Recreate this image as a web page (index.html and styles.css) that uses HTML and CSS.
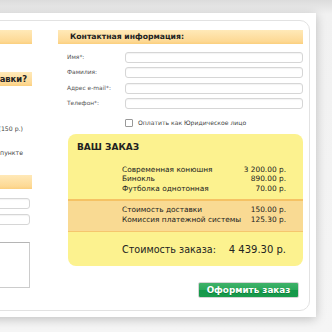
FILE: index.html
```html
<!DOCTYPE html>
<html lang="ru">
<head>
<meta charset="UTF-8" />
<meta name="viewport" content="width=device-width, initial-scale=1" />
<title>Оформление заказа</title>
<link rel="stylesheet" href="styles.css">
</head>
<body>

<div class="sheet">
  <div class="panel">

    <div class="col-left">
      <div class="bar">Ваш город</div>
      <div class="bar bar-end">Способ доставки?</div>
      <div class="opt opt-first">Курьерская доставка по Москве (150 р.)</div>
      <div class="opt">Самовывоз в пункте</div>
      <div class="bar bar-third">Адрес доставки</div>
      <input class="field field-left" type="text" />
      <input class="field field-left" type="text" />
      <textarea class="note"></textarea>
    </div>

    <div class="col-right">
      <div class="bar">Контактная информация:</div>

      <div class="form">
        <label>Имя*:</label><input class="field" type="text" />
        <label>Фамилия:</label><input class="field" type="text" />
        <label>Адрес e-mail*:</label><input class="field" type="text" />
        <label>Телефон*:</label><input class="field" type="text" />
      </div>

      <div class="legal">
        <span class="check"></span>
        <span>Оплатить как Юридическое лицо</span>
      </div>

      <div class="order">
        <div class="order-title">ВАШ ЗАКАЗ</div>
        <div class="lines">
          <div class="line"><span>Современная конюшня</span><span>3 200.00 р.</span></div>
          <div class="line"><span>Бинокль</span><span>890.00 р.</span></div>
          <div class="line"><span>Футболка однотонная</span><span>70.00 р.</span></div>
        </div>
        <div class="band">
          <div class="line"><span>Стоимость доставки</span><span>150.00 р.</span></div>
          <div class="line"><span>Комиссия платежной системы</span><span>125.30 р.</span></div>
        </div>
        <div class="total">
          <span>Стоимость заказа:</span>
          <span class="sum">4 439.30 р.</span>
        </div>
      </div>

      <div class="actions">
        <button class="submit">Оформить заказ</button>
      </div>
    </div>

  </div>
</div>

</body>
</html>
```

FILE: styles.css
```css
body {
  margin: 0;
  height: 332px;
  overflow: hidden;
  background: linear-gradient(#dcdcdc, #f1f1f1 14px, #f5f5f5);
  font-family: Verdana, "DejaVu Sans", sans-serif;
  color: #333;
}
.sheet {
  margin: 13px 0 0 -220px;
  width: 524px;
  padding: 7px 6px 6px 6px;
  background: #fff;
  box-shadow: 0 2px 10px rgba(0, 0, 0, 0.22);
}
.panel {
  display: flex;
  gap: 26px;
  height: 280px;
  padding: 9px 6px 0 20px;
  border: 1px solid #e2e2e2;
  border-radius: 10px;
}
.col-left {
  width: 225px;
  display: flex;
  flex-direction: column;
  align-items: flex-end;
}
.col-right {
  width: 245px;
}
.bar {
  align-self: stretch;
  height: 14px;
  line-height: 14px;
  padding-left: 12px;
  font-size: 7.7px;
  font-weight: bold;
  color: #222;
  white-space: nowrap;
  background: linear-gradient(#ffe9b8, #fdd995 80%, #fbcf7e);
}
.bar-end {
  margin-top: 28px;
  text-align: right;
  padding-right: 5px;
  font-size: 8.4px;
}
.opt {
  font-size: 6.2px;
  color: #444;
  white-space: nowrap;
  margin-right: 9px;
  line-height: 10px;
}
.opt-first {
  margin-top: 38px;
}
.opt + .opt {
  margin-top: 14px;
}
.bar-third {
  margin-top: 17px;
}
.field {
  box-sizing: border-box;
  height: 11px;
  margin: 0;
  padding: 0;
  border: 1px solid #d6d6d6;
  border-radius: 3px;
  background: #fff;
  box-shadow: inset 0 1px 1px rgba(0, 0, 0, 0.05);
}
.field-left {
  width: 200px;
  margin-right: 2px;
  margin-top: 9px;
}
.field-left + .field-left {
  margin-top: 5px;
}
.note {
  box-sizing: border-box;
  width: 200px;
  height: 46px;
  margin: 17px 2px 0 0;
  border: 1px solid #b5b5b5;
  border-right-color: #ccc;
  border-bottom-color: #ccc;
  resize: none;
}
.form {
  display: grid;
  grid-template-columns: 58px 178px;
  grid-auto-rows: 11px;
  row-gap: 4.33px;
  margin-top: 8px;
  padding-left: 9px;
}
.form label {
  font-size: 5.9px;
  line-height: 11px;
  color: #555;
  white-space: nowrap;
}
.legal {
  display: flex;
  align-items: center;
  gap: 5px;
  margin-top: 10px;
  padding-left: 67px;
  height: 8px;
  font-size: 6.1px;
  color: #444;
  white-space: nowrap;
}
.check {
  box-sizing: border-box;
  width: 8px;
  height: 8px;
  border: 1px solid #999;
  border-radius: 1px;
  background: #fff;
}
.order {
  box-sizing: border-box;
  height: 132px;
  margin: 7px 0 0 10px;
  border-radius: 8px;
  background: #fcf28f;
  overflow: hidden;
}
.order-title {
  padding: 7px 0 0 9px;
  font-size: 9px;
  line-height: 12px;
  font-weight: bold;
  color: #222;
}
.lines {
  margin-top: 12px;
  padding: 0 17px 0 54px;
}
.line {
  display: flex;
  justify-content: space-between;
  font-size: 7.4px;
  line-height: 9.5px;
  color: #222;
  white-space: nowrap;
}
.band {
  margin-top: 5.25px;
  padding: 4px 17px 6px 54px;
  background: #f9da93;
  border-top: 2px solid #f5c264;
  border-bottom: 1px solid #f5c66e;
}
.band .line {
  line-height: 10px;
}
.total {
  display: flex;
  justify-content: space-between;
  margin-top: 11px;
  padding: 0 17px 0 54px;
  font-size: 9.6px;
  line-height: 14px;
  color: #222;
  white-space: nowrap;
}
.sum {
  font-size: 10px;
}
.actions {
  display: flex;
  justify-content: flex-end;
  margin-top: 16px;
  padding-right: 4px;
}
.submit {
  box-sizing: border-box;
  width: 101px;
  height: 16px;
  padding: 0;
  border: 1px solid #d5d5d5;
  border-radius: 2px;
  background: linear-gradient(#3fb269, #2aa75a 50%, #14984a 50%, #189b4b);
  color: #fff;
  font-family: Verdana, "DejaVu Sans", sans-serif;
  font-size: 8.8px;
  font-weight: bold;
  text-shadow: 0 1px 0 rgba(0, 0, 0, 0.2);
}
```
